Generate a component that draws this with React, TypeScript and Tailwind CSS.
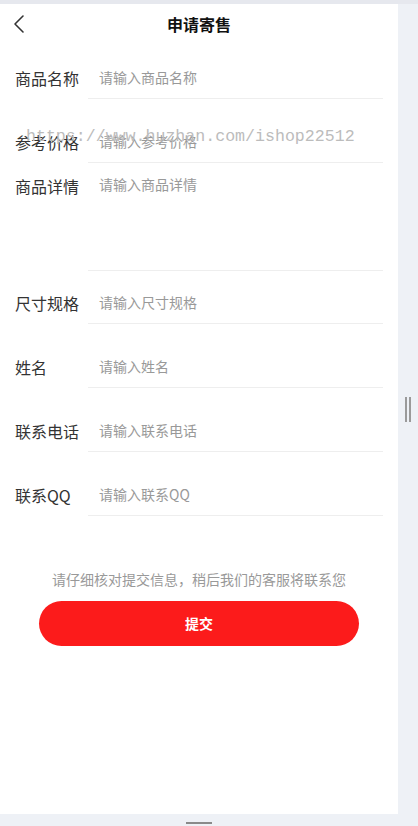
import React from 'react';

type Field = { label: string; placeholder: string; h: string };

const fields: Field[] = [
  { label: '商品名称', placeholder: '请输入商品名称', h: 'h-[55px]' },
  { label: '参考价格', placeholder: '请输入参考价格', h: 'h-[64px]' },
];

const fieldsAfter: Field[] = [
  { label: '尺寸规格', placeholder: '请输入尺寸规格', h: 'h-[53px]' },
  { label: '姓名', placeholder: '请输入姓名', h: 'h-[64px]' },
  { label: '联系电话', placeholder: '请输入联系电话', h: 'h-[64px]' },
  { label: '联系QQ', placeholder: '请输入联系QQ', h: 'h-[64px]' },
];

const Row: React.FC<{ field: Field }> = ({ field }) => (
  <div className={`flex items-end ${field.h}`}>
    <label className="w-[88px] shrink-0 pl-[15px] pb-[11px] text-[16px] leading-[20px] text-[#333]">{field.label}</label>
    <div className="flex-1 mr-[15px] h-full flex items-end border-b border-[#eeeeee]">
      <input
        type="text"
        placeholder={field.placeholder}
        className="w-full pl-[11px] pb-[11px] text-[14px] leading-[20px] bg-transparent outline-none placeholder:text-[#999]"
      />
    </div>
  </div>
);

const App: React.FC = () => {
  return (
    <div
      className="w-[418px] h-[826px] bg-[#eef1f6] flex flex-col overflow-hidden"
      style={{ fontFamily: '"Noto Sans CJK SC", "Noto Sans", sans-serif' }}
    >
      <div className="h-[4px] bg-[#e6e8ee]" />
      <div className="flex-1 flex">
        <div className="relative w-[398px] bg-white">
          <div className="relative h-[40px] flex items-center justify-center">
            <button className="absolute left-[10px] top-[8px] p-[2px]">
              <svg width="14" height="20" viewBox="0 0 14 20" fill="none">
                <path d="M11 2 L3 10 L11 18" stroke="#333" strokeWidth="1.6" strokeLinecap="round" strokeLinejoin="round" />
              </svg>
            </button>
            <h1 className="text-[16px] font-bold text-[#111]">申请寄售</h1>
          </div>

          {fields.map(f => (
            <Row key={f.label} field={f} />
          ))}

          <div className="flex h-[108px]">
            <label className="w-[88px] shrink-0 pl-[15px] pt-[13px] text-[16px] leading-[20px] text-[#333]">商品详情</label>
            <div className="flex-1 mr-[15px] border-b border-[#eeeeee]">
              <textarea
                placeholder="请输入商品详情"
                className="w-full h-full resize-none pl-[11px] pt-[11px] text-[14px] leading-[20px] bg-transparent outline-none placeholder:text-[#999]"
              />
            </div>
          </div>

          {fieldsAfter.map(f => (
            <Row key={f.label} field={f} />
          ))}

          <p className="mt-[53px] text-center text-[14px] leading-[20px] text-[#999]">请仔细核对提交信息，稍后我们的客服将联系您</p>
          <div className="mt-[12px] px-[39px]">
            <button className="w-[320px] h-[45px] rounded-full bg-[#fc1b1b] text-white text-[14px] font-bold">提交</button>
          </div>

          <div
            className="pointer-events-none absolute left-[26px] top-[121px] text-[16.6px] leading-[24px] text-[#bcbcbc]"
            style={{ fontFamily: '"Liberation Mono", monospace' }}
          >
            https://www.huzhan.com/ishop22512
          </div>
        </div>
        <div className="flex-1 flex items-center justify-center">
          <div className="flex gap-[2px]">
            <div className="w-[2px] h-[25px] bg-[#9a9a9a]" />
            <div className="w-[2px] h-[25px] bg-[#9a9a9a]" />
          </div>
        </div>
      </div>
      <div className="h-[12px] flex items-center">
        <div className="w-[398px] flex justify-center">
          <div className="w-[26px] h-[2px] mt-[6px] bg-[#8a8a8a]" />
        </div>
      </div>
    </div>
  );
};

export default App;
